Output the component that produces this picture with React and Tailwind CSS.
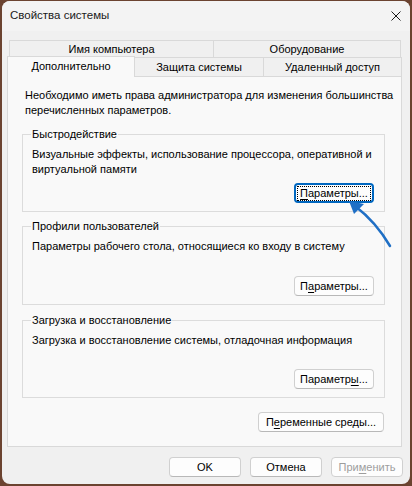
import React from 'react';

const font = "font-['Liberation_Sans','Arial',sans-serif]";

function Btn({ children, w = 'w-[80px]', focused = false, disabled = false }) {
  return (
    <div
      className={`${w} h-[20px] rounded-[4px] flex items-center justify-center bg-[#fdfdfd] ${
        focused ? 'border-2 border-[#0067c0]' : 'border border-[#d0d0d0] border-b-[#b8b8b8]'
      } ${disabled ? 'text-[#9d9d9d] border-b-[#d0d0d0]' : 'text-black'}`}
    >
      {focused ? (
        <span className="border border-dotted border-black px-[2px] leading-[13px]">{children}</span>
      ) : (
        <span className="leading-[15px]">{children}</span>
      )}
    </div>
  );
}

function Group({ title, text, button, h, mt }) {
  return (
    <div className={`relative ${h} ${mt} border border-[#dcdcdc] flex flex-col pl-[9px] pr-[10px] pt-[12px] pb-[8px]`}>
      <span className="absolute left-[8px] -top-[8px] px-[1px] leading-[15px] bg-[#f9f9f9]">{title}</span>
      <p className="leading-[15px]">{text}</p>
      <div className="mt-auto flex justify-end">{button}</div>
    </div>
  );
}

export default function App() {
  return (
    <div className={`relative w-[412px] h-[486px] bg-[#6b4330] overflow-hidden text-[11px] text-black ${font}`}>
      <div className="ml-[2px] mt-[1px] w-[408px] h-[483px] rounded-[8px] bg-[#f0f0f0] flex flex-col overflow-hidden">
        {/* title bar */}
        <div className="h-[30px] bg-[#f3f3f3] flex items-center justify-between pl-[8px] pr-[8px] shrink-0">
          <span className="text-[#1a1a1a] text-[11.5px]">Свойства системы</span>
          <svg width="10" height="10" viewBox="0 0 10 10" className="mr-[1px]">
            <path d="M0.5 0.5 L9.5 9.5 M9.5 0.5 L0.5 9.5" stroke="#1a1a1a" strokeWidth="1" fill="none" />
          </svg>
        </div>

        {/* tabs */}
        <div className="mt-[9px] ml-[5px] flex flex-col">
          <div className="flex ml-[2px] h-[17px]">
            <div className="w-[205px] h-[18px] border border-b-0 border-[#d9d9d9] flex items-center justify-center">Имя компьютера</div>
            <div className="w-[188px] h-[18px] -ml-[1px] border border-b-0 border-[#d9d9d9] flex items-center justify-center">Оборудование</div>
          </div>
          <div className="flex h-[19px] items-start">
            <div className="relative z-10 -mt-[1px] w-[128px] h-[21px] border border-b-0 border-[#d9d9d9] bg-[#f9f9f9] flex items-center justify-center pb-[2px]">
              Дополнительно
            </div>
            <div className="w-[130px] h-[19px] -ml-[1px] border border-b-0 border-[#d9d9d9] flex items-center justify-center">Защита системы</div>
            <div className="w-[139px] h-[19px] -ml-[1px] border border-b-0 border-[#d9d9d9] flex items-center justify-center">Удаленный доступ</div>
          </div>

          {/* panel */}
          <div className="w-[395px] h-[371px] border border-[#d9d9d9] bg-[#f9f9f9] flex flex-col">
            <p className="pl-[17px] pt-[11px] leading-[15px] pr-[6px]">
              Необходимо иметь права администратора для изменения большинства перечисленных параметров.
            </p>
            <div className="ml-[14px] w-[363px] flex flex-col">
              <Group
                mt="mt-[16px]"
                h="h-[78px]"
                title="Быстродействие"
                text="Визуальные эффекты, использование процессора, оперативной и виртуальной памяти"
                button={
                  <Btn focused>
                    <span className="underline underline-offset-2">П</span>араметры...
                  </Btn>
                }
              />
              <Group
                mt="mt-[14px]"
                h="h-[79px]"
                title="Профили пользователей"
                text="Параметры рабочего стола, относящиеся ко входу в систему"
                button={
                  <Btn>
                    П<span className="underline underline-offset-2">а</span>раметры...
                  </Btn>
                }
              />
              <Group
                mt="mt-[15px]"
                h="h-[78px]"
                title="Загрузка и восстановление"
                text="Загрузка и восстановление системы, отладочная информация"
                button={
                  <Btn>
                    Параметр<span className="underline underline-offset-2">ы</span>...
                  </Btn>
                }
              />
            </div>
            <div className="mt-[14px] mr-[17px] self-end">
              <Btn w="w-[126px]">
                П<span className="underline underline-offset-2">е</span>ременные среды...
              </Btn>
            </div>
          </div>
        </div>

        {/* dialog buttons */}
        <div className="mt-[10px] flex justify-end gap-[9px] pr-[7px]">
          <Btn w="w-[72px]">OK</Btn>
          <Btn w="w-[72px]">Отмена</Btn>
          <Btn w="w-[72px]" disabled>
            При<span className="underline underline-offset-2">м</span>енить
          </Btn>
        </div>
      </div>

      {/* annotation arrow */}
      <svg className="absolute left-0 top-0 pointer-events-none" width="412" height="486" viewBox="0 0 412 486">
        <path d="M390 246 Q 376 222 355 206" stroke="#1f6fc5" strokeWidth="2.5" fill="none" strokeLinecap="round" />
        <polygon points="349,201 364,204 354,214" fill="#1f6fc5" />
      </svg>
    </div>
  );
}
